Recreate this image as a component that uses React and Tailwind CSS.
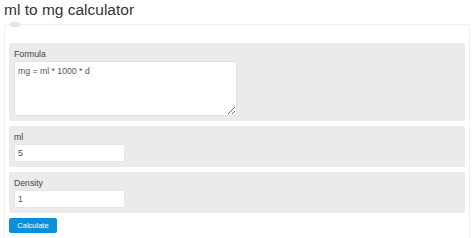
import React from "react";

export default function App() {
  return (
    <div className="w-[474px] h-[238px] bg-white overflow-hidden px-[4px] font-['Liberation_Sans',Arial,sans-serif] text-[#333]">
      <h1 className="text-[15.5px] leading-[18px] pt-[1px] text-[#333] font-normal">ml to mg calculator</h1>
      <div className="relative mt-[5px] border border-[#f1f1f1] rounded-[2px] px-[4px] pt-[18px] pb-[8px] w-[466px]">
        <div className="absolute left-[5px] top-[-3px] w-[10px] h-[5px] rounded-[2px] bg-[#e6e6e6]"></div>
        <div className="flex flex-col gap-[5px]">
          <div className="bg-[#ebebeb] rounded-[2px] px-[5px] pt-[4px] pb-[5px]">
            <div className="text-[8.7px] leading-[14px] text-[#444]">Formula</div>
            <textarea
              className="block w-[223px] h-[55px] bg-white border border-[#e2e2e2] rounded-[2px] px-[3px] py-[3px] text-[8.7px] leading-[12px] text-[#555] outline-none"
              defaultValue="mg = ml * 1000 * d"
              readOnly
            />
          </div>
          <div className="bg-[#ebebeb] rounded-[2px] px-[5px] pt-[4px] pb-[5px]">
            <div className="text-[8.7px] leading-[14px] text-[#444]">ml</div>
            <input
              className="block w-[111px] h-[18px] bg-white border border-[#e6e6e6] rounded-[2px] px-[3px] text-[8.7px] text-[#555] outline-none"
              defaultValue="5"
              readOnly
            />
          </div>
          <div className="bg-[#ebebeb] rounded-[2px] px-[5px] pt-[4px] pb-[5px]">
            <div className="text-[8.7px] leading-[14px] text-[#444]">Density</div>
            <input
              className="block w-[111px] h-[18px] bg-white border border-[#e6e6e6] rounded-[2px] px-[3px] text-[8.7px] text-[#555] outline-none"
              defaultValue="1"
              readOnly
            />
          </div>
          <button className="block w-[48px] h-[15px] bg-[#0b8fd9] rounded-[2px] text-white text-[7.5px] leading-[15px] text-center">Calculate</button>
        </div>
      </div>
    </div>
  );
}
